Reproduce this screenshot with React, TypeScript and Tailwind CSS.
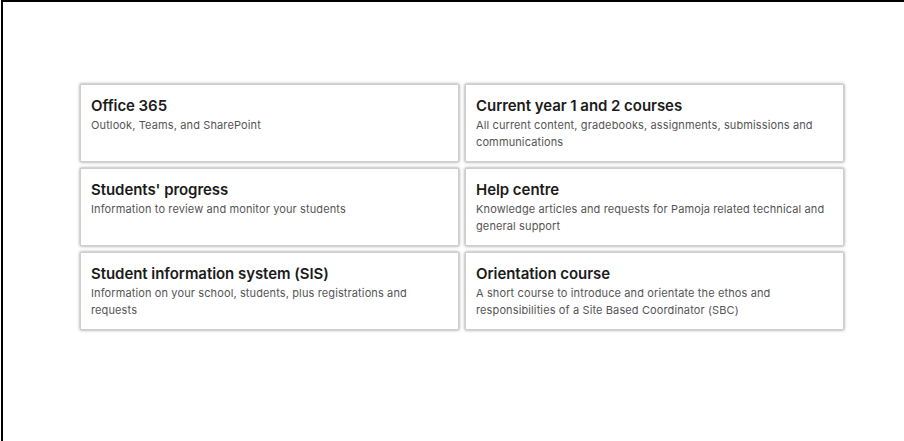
import React from 'react';

interface Tile { title: string; text: string; }

const tiles: Tile[] = [
  { title: 'Office 365', text: 'Outlook, Teams, and SharePoint' },
  { title: 'Current year 1 and 2 courses', text: 'All current content, gradebooks, assignments, submissions and communications' },
  { title: "Students' progress", text: 'Information to review and monitor your students' },
  { title: 'Help centre', text: 'Knowledge articles and requests for Pamoja related technical and general support' },
  { title: 'Student information system (SIS)', text: 'Information on your school, students, plus registrations and requests' },
  { title: 'Orientation course', text: 'A short course to introduce and orientate the ethos and responsibilities of a Site Based Coordinator (SBC)' },
];

export default function App() {
  return (
    <div className="w-[904px] h-[441px] bg-white border-t-2 border-l-2 border-black ml-px overflow-hidden font-['Inter',sans-serif]">
      <div className="pt-[82px] pl-[77px]">
        <div className="grid grid-cols-[379px_379px] gap-[6px]">
          {tiles.map((tile) => (
            <a key={tile.title} href="#" className="block h-[78px] bg-white border border-[#cfcfcf] shadow-[0_0_3px_rgba(0,0,0,0.45)] pl-[10px] pr-[6px] pt-[11px]">
              <div className="text-[15px] leading-[20px] font-semibold text-[#1b1b1b] tracking-[-0.05px]">{tile.title}</div>
              <div className="mt-[1px] text-[11px] leading-[17px] text-[#555555] tracking-[0.12px]">{tile.text}</div>
            </a>
          ))}
        </div>
      </div>
    </div>
  );
}
